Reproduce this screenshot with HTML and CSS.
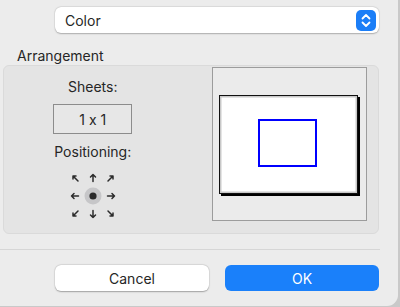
FILE: index.html
```html
<!DOCTYPE html>
<html><head><meta charset="UTF-8" /><link rel="stylesheet" href="styles.css"></head>
<body>
<div class="window">
	<div class="popup-row">
		<div class="popup">
			<span>Color</span>
			<span class="stepper">
				<svg width="20" height="21" viewBox="0 0 20 21">
					<path d="M6.5 8.5 L10 5 L13.5 8.5 M6.5 12.5 L10 16 L13.5 12.5" fill="none" stroke="white" stroke-width="1.8" stroke-linecap="round" stroke-linejoin="round"/>
				</svg>
			</span>
		</div>
	</div>
	<div class="section-label">Arrangement</div>
	<div class="group">
		<div class="left-col">
			<div class="label sheets-label">Sheets:</div>
			<div class="sheets-box">1 x 1</div>
			<div class="label pos-label">Positioning:</div>
			<!-- 3x3 grid of direction arrows, centre is selected -->
			<svg class="arrows" width="54" height="54" viewBox="0 0 54 54">
				<g fill="none" stroke="#2b2b2b" stroke-width="1.5" stroke-linecap="round" stroke-linejoin="round">
					<path d="M12 12 L7 7 M7 10 L7 7 L10 7"/>
					<path d="M27 12.5 L27 5.5 M24.5 8 L27 5.5 L29.5 8"/>
					<path d="M42 12 L47 7 M44 7 L47 7 L47 10"/>
					<path d="M12.5 27 L5.5 27 M8 24.5 L5.5 27 L8 29.5"/>
					<path d="M41.5 27 L48.5 27 M46 24.5 L48.5 27 L46 29.5"/>
					<path d="M12 42 L7 47 M7 44 L7 47 L10 47"/>
					<path d="M27 41.5 L27 48.5 M24.5 46 L27 48.5 L29.5 46"/>
					<path d="M42 42 L47 47 M47 44 L47 47 L44 47"/>
				</g>
				<circle cx="27" cy="27" r="8.5" fill="#c6c6c8"/>
				<circle cx="27" cy="27" r="3.6" fill="#2b2b2b"/>
			</svg>
		</div>
		<div class="preview">
			<div class="paper">
				<div class="sheet-area"></div>
			</div>
		</div>
	</div>
	<div class="separator"></div>
	<div class="buttons">
		<button class="btn cancel">Cancel</button>
		<button class="btn ok">OK</button>
	</div>
</div>
</body></html>
```
FILE: styles.css
```css
body { margin: 0; background: #c9c9c9; width: 400px; height: 307px; overflow: hidden;
	font-family: Inter, "Liberation Sans", sans-serif; font-size: 14px; color: #262626;
	font-feature-settings: "calt" 0;
}
.window { width: 398px; height: 306px; background: #ececec; border-bottom-right-radius: 11px; overflow: hidden; }
.popup-row { padding: 7px 0 0 55px; }
.popup { width: 324px; height: 26px; box-sizing: border-box; background: #fff; border-radius: 6px;
	box-shadow: 0 0.5px 1.5px rgba(0,0,0,0.25), 0 0 0 0.5px rgba(0,0,0,0.06);
	display: flex; align-items: center; justify-content: space-between; padding: 0 3px 0 10px;
}
.stepper { width: 20px; height: 21px; background: #1b7ef7; border-radius: 5px; display: flex; }
.section-label { padding: 14px 0 0 17px; height: 18px; line-height: 18px; }
.group { margin: 0 0 0 3px; width: 376px; height: 169px; box-sizing: border-box;
	background: #e4e4e4; border: 1px solid #dadada; border-radius: 6px;
	display: flex; padding: 1px 11px 0 0;
}
.left-col { width: 178px; display: flex; flex-direction: column; align-items: center; }
.label { height: 18px; line-height: 18px; }
.sheets-label { margin-top: 11px; }
.sheets-box { margin-top: 8px; width: 79px; height: 30px; box-sizing: border-box;
	border: 1.5px solid #8c8c8c; background: #e7e7e7; display: flex; align-items: center; justify-content: center;
}
.pos-label { margin-top: 9px; }
.arrows { margin-top: 8px; }
.preview { margin-left: 31px; width: 155px; height: 154px; box-sizing: border-box;
	border: 1.5px solid #9c9c9c; background: #ebebeb;
	display: flex; align-items: center; padding: 0 0 0 5.5px;
}
.paper { width: 139px; height: 99px; box-sizing: border-box; border: 1.5px solid #111;
	box-shadow: 2px 2px 0 #000, inset 0 0 0 1.5px #c8c8c8; background: #fff;
	display: flex; align-items: center; justify-content: center; margin-top: 0;
}
.sheet-area { width: 59px; height: 48px; box-sizing: border-box; border: 2.5px solid #0000ff; margin: -2px 0 0 -2px; }
.separator { margin: 15px 0 0 0; width: 380px; height: 1px; background: #d6d6d6; }
.buttons { display: flex; gap: 16px; padding: 15px 0 0 55px; }
.btn { width: 154px; height: 26px; border: none; border-radius: 6px; font: inherit; font-size: 14px; }
.cancel { background: #fff; color: #262626; box-shadow: 0 0.5px 1.5px rgba(0,0,0,0.3), 0 0 0 0.5px rgba(0,0,0,0.06); }
.ok { background: #1a80fa; color: #fff; }
```
